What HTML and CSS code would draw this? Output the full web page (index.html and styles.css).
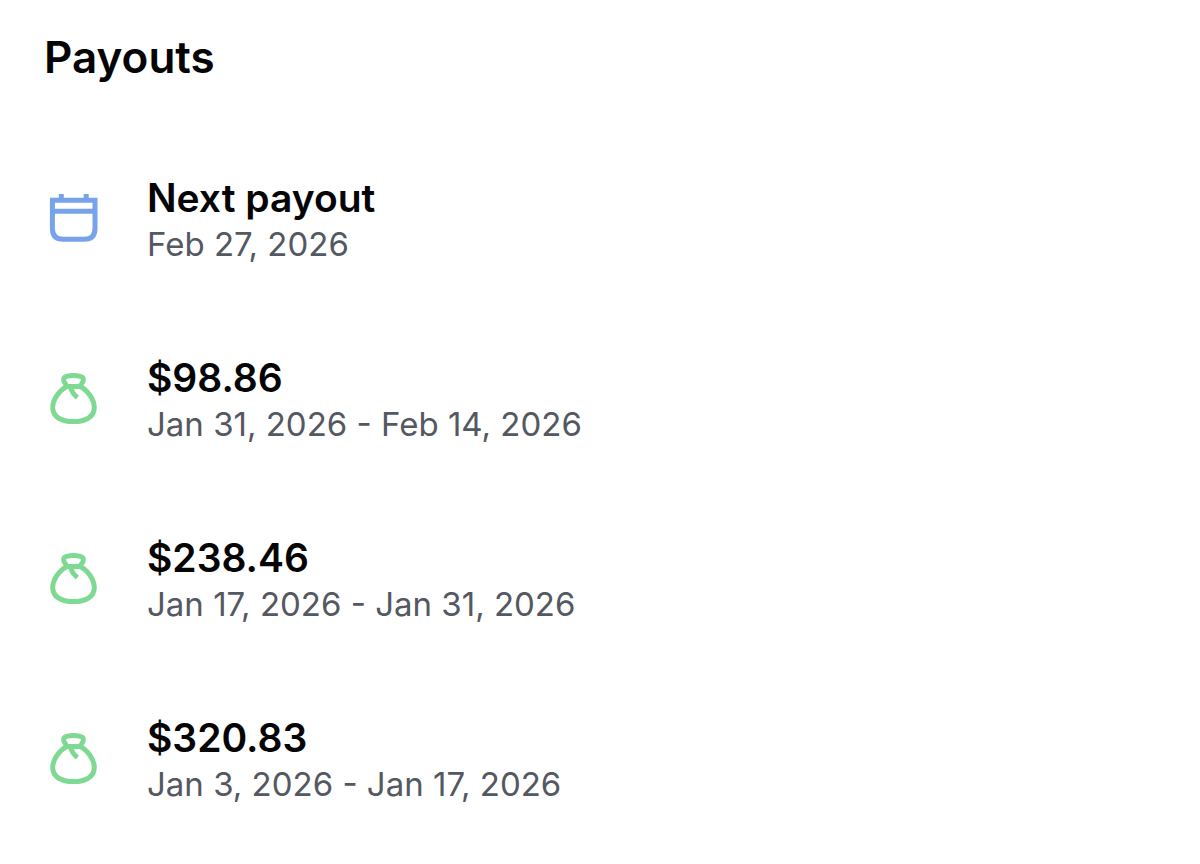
FILE: index.html
```html
<!DOCTYPE html>
<html lang="en">
<head>
<meta charset="utf-8">
<meta name="viewport" content="width=device-width, initial-scale=1">
<title>Payouts</title>
<link rel="stylesheet" href="styles.css">
</head>
<body>
<svg class="sprite" aria-hidden="true">
  <symbol id="bag" viewBox="0 0 56 56">
    <path d="M22 14.500C13.500 18.500 7.700 28.500 7.700 35.500C7.700 45 16.500 49.600 28.500 49.600S49.300 45 49.300 35.500C49.300 28.500 43.500 18.500 35 14.500Z"/>
    <path d="M22 14.500L19 9.500Q17.500 5.500 21.500 4.400Q28.500 2.800 35.500 4.400Q39.500 5.500 38 9.500L35 14.500"/>
    <path d="M25.500 15Q27 21.500 32.500 25.500"/>
  </symbol>
</svg>
<main class="payouts">
  <h1 class="title">Payouts</h1>
  <ul class="list">
    <li class="row">
      <svg class="icon icon-calendar" viewBox="0 0 56 56" aria-hidden="true">
        <path d="M7.400 8.200H50V36.500Q50 47.300 39.200 47.300H18.200Q7.400 47.300 7.400 36.500ZM7.400 19.300H50M16.300 2V8M41.200 2V8"/>
      </svg>
      <div class="text"><h2 class="name">Next payout</h2><p class="date">Feb 27, 2026</p></div>
    </li>
    <li class="row">
      <svg class="icon icon-bag" aria-hidden="true"><use href="#bag"/></svg>
      <div class="text"><h2 class="name">$98.86</h2><p class="date">Jan 31, 2026 - Feb 14, 2026</p></div>
    </li>
    <li class="row">
      <svg class="icon icon-bag" aria-hidden="true"><use href="#bag"/></svg>
      <div class="text"><h2 class="name">$238.46</h2><p class="date">Jan 17, 2026 - Jan 31, 2026</p></div>
    </li>
    <li class="row">
      <svg class="icon icon-bag" aria-hidden="true"><use href="#bag"/></svg>
      <div class="text"><h2 class="name">$320.83</h2><p class="date">Jan 3, 2026 - Jan 17, 2026</p></div>
    </li>
  </ul>
</main>
</body>
</html>
```
FILE: styles.css
```css
body {
  margin: 0;
  background: #fff;
  color: #050506;
  font-family: Inter, "Liberation Sans", sans-serif;
}
.sprite { position: absolute; width: 0; height: 0; }
.payouts { padding: 27px 44px; }
.title { margin: 0; font-size: 44px; line-height: 60px; font-weight: 600; }
.list {
  display: flex;
  flex-direction: column;
  gap: 88px;
  margin: 87px 0 0;
  padding: 0;
  list-style: none;
}
.row { display: flex; align-items: center; gap: 45px; }
.icon { flex: none; width: 58px; height: 56px; fill: none; stroke-width: 5; }
.icon-calendar { stroke: #76a3ea; }
.icon-bag { stroke: #7ed992; stroke-linejoin: round; }
.name { margin: 0; font-size: 39px; line-height: 48px; font-weight: 600; }
.date { margin: 0; font-size: 33px; line-height: 44px; color: #535861; }
```
